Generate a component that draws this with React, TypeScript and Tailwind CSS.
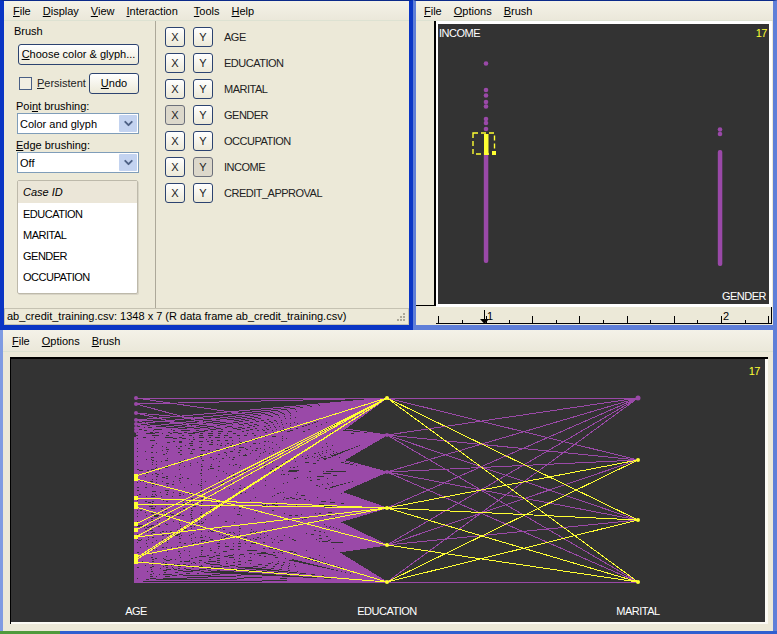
import { ChevronDown } from 'lucide-react'

const FONT = "font-['Liberation_Sans',Arial,sans-serif]"
const PURPLE = '#9a49a8'
const YELLOW = '#ffff33'

const variables = ['AGE', 'EDUCATION', 'MARITAL', 'GENDER', 'OCCUPATION', 'INCOME', 'CREDIT_APPROVAL']

const AGE_X = 136
const EDU_X = 387
const MAR_X = 638
const eduY = [398, 435, 472, 508, 545, 582]
const marY = [398, 460, 520, 582]

// small fixed generator so the picture is the same on every load
function makeRandom(seed: number) {
  let s = seed
  return () => {
    s = (s * 1664525 + 1013904223) % 4294967296
    return s / 4294967296
  }
}

function buildAgeEdges() {
  const rand = makeRandom(17)
  const edges: [number, number][] = []
  for (let a = 437; a <= 582; a += 2.6) {
    eduY.forEach((e) => {
      if (rand() < 0.8) edges.push([Math.round(a), e])
    })
  }
  // the extreme ages keep the fans closed at their outer edges
  eduY.forEach((e) => {
    edges.push([437, e])
    edges.push([582, e])
  })
  const sparse: [number, number[]][] = [
    [398, [435, 398]],
    [404, [472, 398]],
    [413, [435, 472]],
    [420, [398, 435, 508]],
    [424, [398, 472, 508, 545]],
    [428, [398, 435, 472, 582]],
    [431, [398, 435, 508, 545]],
    [434, [398, 435, 472, 508, 582]],
  ]
  sparse.forEach(([a, list]) => list.forEach((e) => edges.push([a, e])))
  return edges
}

const ageEdges = buildAgeEdges()

const yellowAge: [number, number][] = [
  [476, 398],
  [479, 545],
  [498, 508],
  [504, 508],
  [507, 582],
  [524, 398],
  [530, 398],
  [537, 398],
  [537, 508],
  [556, 508],
  [558, 398],
  [560, 398],
  [562, 582],
]

const yellowMar: [number, number][] = [
  [398, 520],
  [398, 582],
  [508, 460],
  [508, 520],
  [508, 582],
  [545, 582],
  [582, 460],
  [582, 520],
]

const yellowAgeDots = [476, 479, 498, 504, 507, 524, 530, 537, 556, 560, 562]
const ticks = [437, 461, 485, 508, 531, 555, 578, 602, 626, 649, 673, 696, 720, 744, 767]
const majorTicks = [437, 485, 531, 578, 626, 673, 720, 767]

function Menu({ items, className }: { items: string[]; className: string }) {
  return (
    <div className={`flex items-center gap-[12px] bg-gradient-to-b from-[#f4f2e8] to-[#ebe8da] border-b border-[#dde2d2] text-[11px] text-black ${className}`}>
      {items.map((item) => (
        <span key={item} className={item === 'Tools' ? 'ml-[4px]' : ''}>
          <u>{item[0]}</u>
          {item.slice(1)}
        </span>
      ))}
    </div>
  )
}

function Btn({ children, className = '' }: { children: React.ReactNode; className?: string }) {
  return (
    <div className={`flex items-center justify-center rounded-[3px] border border-[#2c4370] bg-gradient-to-b from-white to-[#ece9d8] text-[11px] text-black ${className}`}>
      {children}
    </div>
  )
}

function Combo({ value }: { value: string }) {
  return (
    <div className="ml-[13px] flex h-[21px] w-[122px] items-center justify-between border border-[#7f9db9] bg-white pl-[2px] pr-[1px] text-[11px] text-black">
      <span className="pt-[1px]">{value}</span>
      <div className="flex h-[17px] w-[18px] items-center justify-center rounded-[1px] bg-[#c3d3f0]">
        <ChevronDown size={13} strokeWidth={3.5} className="text-[#4d6185]" />
      </div>
    </div>
  )
}

function AxisButton({ label, pressed }: { label: string; pressed: boolean }) {
  return (
    <div
      className={`flex h-[20px] w-[20px] items-center justify-center rounded-[3px] border text-[11px] text-[#222] ${
        pressed ? 'border-[#6b6f7a] bg-[#dcd8cb]' : 'border-[#2c4370] bg-gradient-to-b from-white to-[#ece9d8]'
      }`}
    >
      {label}
    </div>
  )
}

function ControlPanel() {
  return (
    <div className="flex h-[330px] w-[413px] shrink-0 flex-col border-b-[5px] border-l-[4px] border-r-[4px] border-t border-b-[#0a35c4] border-l-[#0a35c4] border-r-[#0a35c4] border-t-[#0b2a8a]">
      <Menu items={['File', 'Display', 'View', 'Interaction', 'Tools', 'Help']} className="h-[20px] pl-[9px] pt-[2px]" />
      <div className="flex h-[287px]">
        <div className="w-[152px] shrink-0 border-r border-[#aca899] text-[11px] text-black">
          <div className="ml-[10px] mt-[4px] h-[13px] leading-[13px]">Brush</div>
          <Btn className="ml-[14px] mt-[6px] h-[21px] w-[121px]">
            <span>
              <u>C</u>hoose color &amp; glyph...
            </span>
          </Btn>
          <div className="ml-[15px] mt-[8px] flex h-[21px] items-center">
            <div className="h-[13px] w-[13px] border border-[#4a5f85] bg-[#f2efe3]" />
            <span className="ml-[5px] w-[52px] text-[#222]">
              <u>P</u>ersistent
            </span>
            <Btn className="h-[21px] w-[50px]">
              <span>
                <u>U</u>ndo
              </span>
            </Btn>
          </div>
          <div className="ml-[12px] mt-[5px] h-[14px] leading-[14px]">
            Poi<u>n</u>t brushing:
          </div>
          <Combo value="Color and glyph" />
          <div className="ml-[12px] mt-[5px] h-[13px] leading-[13px]">
            <u>E</u>dge brushing:
          </div>
          <Combo value="Off" />
          <div className="ml-[13px] mt-[7px] h-[114px] w-[121px] rounded-[2px] border border-[#bdb9aa] bg-white shadow-[1px_1px_0_#d8d4c6]">
            <div className="flex h-[22px] items-center bg-[#ebe6d8] pl-[5px] italic">Case ID</div>
            {['EDUCATION', 'MARITAL', 'GENDER', 'OCCUPATION'].map((name) => (
              <div key={name} className="flex h-[21px] items-center pl-[5px] pt-[1px] tracking-[-0.5px]">
                {name}
              </div>
            ))}
          </div>
        </div>
        <div className="flex flex-col gap-[6px] pl-[9px] pt-[6px]">
          {variables.map((name) => (
            <div key={name} className="flex h-[20px] items-center">
              <AxisButton label="X" pressed={name === 'GENDER'} />
              <div className="ml-[8px]">
                <AxisButton label="Y" pressed={name === 'INCOME'} />
              </div>
              <span className="ml-[11px] text-[11px] tracking-[-0.5px] text-[#222]">{name}</span>
            </div>
          ))}
        </div>
      </div>
      <div className="flex h-[17px] items-center justify-between border border-[#c5c2b2] pl-[2px] pr-[2px] text-[11px] text-black">
        <span>ab_credit_training.csv: 1348 x 7 (R data frame ab_credit_training.csv)</span>
        <svg width="10" height="10" viewBox="0 0 10 10" fill="#aca899">
          <rect x="7" y="1" width="2" height="2" />
          <rect x="4" y="4" width="2" height="2" />
          <rect x="7" y="4" width="2" height="2" />
          <rect x="1" y="7" width="2" height="2" />
          <rect x="4" y="7" width="2" height="2" />
          <rect x="7" y="7" width="2" height="2" />
        </svg>
      </div>
    </div>
  )
}

function ScatterPlot() {
  const leftDots = [63.5, 90, 95.5, 102, 106.5, 119, 123, 129]
  const rightDots = [129.5, 134]
  return (
    <svg width="331" height="280" viewBox="437 24 331 280" className="block bg-[#333333]" fontSize="11" letterSpacing="-0.5">
      <text x="438" y="37" fill="#ffffff">INCOME</text>
      <text x="766" y="37" fill={YELLOW} textAnchor="end">17</text>
      <text x="765" y="300" fill="#ffffff" textAnchor="end">GENDER</text>
      {leftDots.map((y) => (
        <circle key={y} cx="485" cy={y} r="2.3" fill={PURPLE} />
      ))}
      {rightDots.map((y) => (
        <circle key={y} cx="719" cy={y} r="2.3" fill={PURPLE} />
      ))}
      <rect x="482.8" y="150" width="4.5" height="113" rx="2" fill={PURPLE} />
      <rect x="716.8" y="150" width="4.5" height="116" rx="2" fill={PURPLE} />
      <rect x="483" y="134" width="4.5" height="21" fill={YELLOW} />
      <rect x="491" y="151" width="4" height="4" fill={YELLOW} />
      <rect x="472" y="133" width="21.5" height="21" fill="none" stroke={YELLOW} strokeWidth="1.4" strokeDasharray="5 3" />
    </svg>
  )
}

function Ruler() {
  return (
    <svg width="357" height="18" viewBox="415 307 357 18" className="block" fontSize="11">
      <line x1="435" y1="323.5" x2="770" y2="323.5" stroke="#000" />
      {ticks.map((x) => (
        <line key={x} x1={x + 0.5} y1={majorTicks.includes(x) ? 316 : 320} x2={x + 0.5} y2="324" stroke="#000" />
      ))}
      <line x1="770.5" y1="307" x2="770.5" y2="324" stroke="#000" />
      <line x1="483.5" y1="310" x2="483.5" y2="320" stroke="#000" />
      <polygon points="479,319 488,319 483.5,324" fill="#000" />
      <text x="486" y="320" fill="#000">1</text>
      <text x="722" y="320" fill="#000">2</text>
    </svg>
  )
}

function ScatterWindow() {
  return (
    <div className="flex h-[330px] flex-1 flex-col border-b-[5px] border-l-[3px] border-r-[5px] border-t border-b-[#5f7fd8] border-l-[#5f7fd8] border-r-[#5f7fd8] border-t-[#0b2a8a]">
      <Menu items={['File', 'Options', 'Brush']} className="h-[20px] pl-[8px] pt-[2px]" />
      <div className="flex h-[286px]">
        <div className="h-[285px] w-[20px] shrink-0 border-b border-r-2 border-black" />
        <div className="bg-white pb-[3px] pl-[2px] pr-[3px] pt-[3px]">
          <ScatterPlot />
        </div>
      </div>
      <Ruler />
    </div>
  )
}

function ParallelPlot() {
  return (
    <svg width="754" height="263" viewBox="11 359 754 263" className="block bg-[#333333]" fontSize="11" letterSpacing="-0.5">
      <g stroke={PURPLE} strokeWidth="1" shapeRendering="crispEdges">
        {ageEdges.map(([a, e], i) => (
          <line key={i} x1={AGE_X} y1={a} x2={EDU_X} y2={e} />
        ))}
        {eduY.flatMap((e) =>
          marY.map((m) => <line key={`${e}-${m}`} x1={EDU_X} y1={e} x2={MAR_X} y2={m} />),
        )}
      </g>
      <rect x="134" y="437" width="3" height="146" fill={PURPLE} />
      {[398, 404, 413, 420, 424, 428, 431].map((y) => (
        <circle key={y} cx={AGE_X} cy={y} r="2" fill={PURPLE} />
      ))}
      <circle cx={EDU_X} cy="435" r="2" fill={PURPLE} />
      <circle cx={EDU_X} cy="472" r="2" fill={PURPLE} />
      <circle cx={MAR_X} cy="398" r="2.5" fill={PURPLE} />
      <g stroke={YELLOW} strokeWidth="1" shapeRendering="crispEdges">
        {yellowAge.map(([a, e], i) => (
          <line key={i} x1={AGE_X} y1={a} x2={EDU_X} y2={e} />
        ))}
        {yellowMar.map(([e, m], i) => (
          <line key={i} x1={EDU_X} y1={e} x2={MAR_X} y2={m} />
        ))}
      </g>
      {yellowAgeDots.map((y) => (
        <rect key={y} x="134" y={y - 2} width="4" height="4" fill={YELLOW} />
      ))}
      {[398, 508, 545, 582].map((y) => (
        <circle key={y} cx={EDU_X} cy={y} r="2" fill={YELLOW} />
      ))}
      {[460, 520, 582].map((y) => (
        <circle key={y} cx={MAR_X} cy={y} r="2" fill={YELLOW} />
      ))}
      <text x="760" y="375" fill={YELLOW} textAnchor="end">17</text>
      <text x="136" y="615" fill="#ffffff" textAnchor="middle">AGE</text>
      <text x="387" y="615" fill="#ffffff" textAnchor="middle">EDUCATION</text>
      <text x="638" y="615" fill="#ffffff" textAnchor="middle">MARITAL</text>
    </svg>
  )
}

function ParallelWindow() {
  return (
    <div className="flex h-[304px] flex-col">
      <div className="h-[301px] border-l-[3px] border-r-[4px] border-l-[#7f9be2] border-r-[#5f7fd8]">
        <Menu items={['File', 'Options', 'Brush']} className="h-[22px] pl-[9px] pt-[1px]" />
        <div className="ml-[7px] mt-[5px] w-[758px] border-l border-t-2 border-black">
          <div className="border-b-2 border-r-[3px] border-[#fbfaf4]">
            <ParallelPlot />
          </div>
        </div>
      </div>
      <div className="flex h-[3px]">
        <div className="w-[60px] bg-[#4f9a3c]" />
        <div className="flex-1 bg-[#2f5fd0]" />
      </div>
    </div>
  )
}

export default function App() {
  return (
    <div className={`h-[634px] w-[777px] overflow-hidden bg-[#ece9d8] ${FONT}`}>
      <div className="flex">
        <ControlPanel />
        <ScatterWindow />
      </div>
      <ParallelWindow />
    </div>
  )
}
